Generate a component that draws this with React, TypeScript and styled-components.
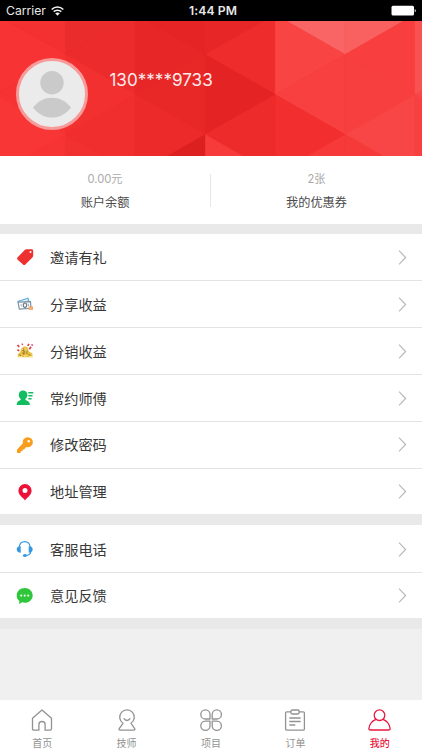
import React from "react";
import styled, { createGlobalStyle } from "styled-components";

const Global = createGlobalStyle`
  * { box-sizing: border-box; }
  body { margin: 0; background: #f0f0f0; }
`;

const Screen = styled.div`
  width: 422px;
  height: 750px;
  display: flex;
  flex-direction: column;
  overflow: hidden;
  background: #f0f0f0;
  color: #333;
  font-family: Inter, "Noto Sans CJK SC", sans-serif;
`;

const StatusBar = styled.header`
  flex: none;
  height: 20.5px;
  padding: 0 5px 0 6px;
  display: grid;
  grid-template-columns: 1fr auto 1fr;
  align-items: center;
  background: #000;
  color: #e8e8e8;
  font-size: 12.2px;
  line-height: 20px;
`;
const Carrier = styled.div`
  display: flex;
  align-items: center;
  gap: 5px;
  padding-top: 1px;
`;
const Clock = styled.div`
  font-weight: 600;
  letter-spacing: 0.1px;
  padding: 1px 0 0 3px;
`;
const BatteryIcon = styled.svg`
  justify-self: end;
`;

const Hero = styled.section`
  flex: none;
  height: 135.3px;
  position: relative;
  background: #f23030;
`;
const HeroPattern = styled.svg`
  position: absolute;
  inset: 0;
  width: 100%;
  height: 100%;
`;
const Profile = styled.div`
  position: relative;
  display: flex;
  gap: 21px;
  padding: 37.5px 0 0 16.4px;
`;
const Avatar = styled.div`
  width: 72px;
  height: 72px;
  border-radius: 50%;
  border: 3px solid #f79a9a;
  background: #ebebeb;
  overflow: hidden;
`;
const Phone = styled.div`
  padding-top: 10px;
  font-size: 17.1px;
  line-height: 24px;
  color: #ffeded;
`;

const Stats = styled.section`
  flex: none;
  height: 67.8px;
  display: grid;
  grid-template-columns: 1fr 1fr;
  padding-top: 18px;
  background: #fff;
`;
const Stat = styled.div<{ $divided?: boolean }>`
  height: 33px;
  display: flex;
  flex-direction: column;
  align-items: center;
  border-right: ${(p) => (p.$divided ? "1px solid #e6e6e6" : "0")};
`;
const StatValue = styled.div`
  margin-top: -4px;
  font-size: 11.2px;
  line-height: 18px;
  color: #a9a9a9;
`;
const StatLabel = styled.div`
  margin-top: 6px;
  font-size: 12.2px;
  line-height: 18px;
  color: #4a4a4a;
`;

const Group = styled.ul<{ $gap: number }>`
  flex: none;
  list-style: none;
  margin: 0;
  padding: 0;
  border-top: ${(p) => p.$gap}px solid #e9e9e9;
  background: #fff;
`;
const Row = styled.li<{ $height: number }>`
  height: ${(p) => p.$height}px;
  padding-top: 1px;
  display: grid;
  grid-template-columns: 50px 1fr 30px;
  align-items: center;
  & + & {
    padding-top: 0.4px;
    border-top: 1px solid #e3e3e3;
  }
`;
const RowIcon = styled.svg`
  width: 18px;
  height: 18px;
  margin-left: 15.5px;
  display: block;
`;
const RowLabel = styled.span`
  padding-top: 1px;
  font-size: 14.2px;
  line-height: 20px;
  color: #383838;
`;
const Chevron = styled.svg`
  width: 9px;
  height: 15px;
  margin-left: 5.5px;
`;
const Band = styled.div`
  flex: none;
  height: 11px;
  background: #e9e9e9;
`;

const TabBar = styled.nav`
  flex: none;
  margin-top: auto;
  height: 50.5px;
  display: grid;
  grid-template-columns: repeat(5, 1fr);
  background: #fff;
`;
const Tab = styled.div<{ $active?: boolean }>`
  display: flex;
  flex-direction: column;
  align-items: center;
  padding-top: 8px;
  font-size: 10px;
  line-height: 14px;
  gap: 4px;
  font-weight: ${(p) => (p.$active ? 500 : 400)};
  color: ${(p) => (p.$active ? "#e8193f" : "#929292")};
`;
const TabIcon = styled.svg`
  width: 24px;
  height: 24px;
  fill: none;
  stroke: currentColor;
  stroke-width: 1.3;
  stroke-linejoin: round;
  stroke-linecap: round;
`;

/* Facet colours of the triangular pattern: one list per 70px strip,
   top to bottom. Triangles alternate between pointing right and left. */
const strips: string[][] = [
  ["#f33131", "#f73333", "#f53333", "#f93636", "#f73434"],
  ["#eb2c2c", "#ec2c2c", "#f23030", "#f12e2e", "#f13030"],
  ["#e52525", "#e72727", "#e82727", "#ec2a2a", "#dc2020"],
  ["#e72727", "#ee2c2c", "#e42424", "#ed2b2b", "#f73a3a"],
  ["#f96565", "#f94444", "#f84040", "#f22e2e", "#f73939"],
  ["#f96060", "#f83e3e", "#f83f3f", "#f84545", "#f63a3a"],
  ["#f96060", "#f95252", "#f84848", "#f94040", "#f94040"],
];
const facets = strips.flatMap((colors, s) =>
  colors.map((fill, i) => {
    const l = -4.4 + s * 69.9;
    const r = l + 69.9;
    const y = -26 + i * 40;
    const pointsRight = (s + i) % 2 === 1;
    const points = pointsRight
      ? `${l},${y} ${l},${y + 80} ${r},${y + 40}`
      : `${r},${y} ${r},${y + 80} ${l},${y + 40}`;
    return { fill, points };
  })
);

type IconName = "tag" | "cash" | "gold" | "master" | "key" | "pin" | "headset" | "chat";
const icons: Record<IconName, React.ReactNode> = {
  tag: (
    <path
      fill="#ed3030"
      fillRule="evenodd"
      d="M10.200 1.200h5.300c1.200 0 1.700.5 1.700 1.600v4.700c0 .8-.2 1.300-.8 1.900l-7 7c-.8.8-1.600.8-2.400 0L1.700 11.800c-.8-.8-.8-1.700 0-2.500l7-7.300c.5-.5.8-.8 1.500-.8zM14.500 2.900a1 1 0 1 0 0 2 1 1 0 0 0 0-2z"
    />
  ),
  cash: (
    <>
      <path fill="#63adde" d="M1.500 6 12.300 2.500l1.400 4.100L2.700 10z" />
      <path fill="#e9f6ff" d="m3.500 6.600 8-2.600.5 1.600L4.200 8z" />
      <path fill="#fff" stroke="#7893a4" strokeWidth="1.200" d="m2 7.100 12.500-.5.4 6.700-11.500.7z" />
      <ellipse cx="9" cy="10.200" rx="1.700" ry="2.200" fill="#f7f7f7" stroke="#687681" strokeWidth="1.100" />
      <path stroke="#9eb3c0" d="m5 9 .4 2.600M12.400 8.600l.2 2.500" />
      <path fill="#ed9a58" d="M12.500 11.500H17v3.300h-4.500z" />
      <path stroke="#ffe0b8" strokeWidth=".6" d="M12.800 13.100h3.700" />
    </>
  ),
  gold: (
    <>
      <path fill="#eac346" d="M5.200 6.500 8 4.200l3.500 1 1.400 4.300 3.400 1.700.3 4.100H1.800v-3L4.200 10z" />
      <path fill="#f5dc7c" d="m6.500 6.500 1.800-1 1.500 1.200L9 9.500l-2.300 2z" />
      <path fill="none" stroke="#9b7628" strokeWidth=".9" d="M7.800 6v6.700M6.200 8.400l3 1M6 11.200l3.300-.2M3 12.500l2.200 1.400M11.300 8.500l-.6 3.400M12.200 12.200l2.300 1.300" />
      <path fill="none" stroke="#fff1b4" strokeWidth=".7" d="M3 14.500h3M8 13.900h3M13 14.500h3" />
      <path fill="none" stroke="#de3d45" strokeWidth="1.700" d="m1.500 3 1.700 1.900M1.500 7.700l1.700 1.200M5.800 2.700l1-.8M11.700 3.900l1.300-2M13.300 7.300l1.700-2.600M15.800 3.700l.7-1.400" />
    </>
  ),
  master: (
    <g fill="#12bc60">
      <path d="M2.800 5.700C2.800 3.100 4.400 1.400 7 1.400s4.400 1.700 4.400 4.300c0 2-.9 3.500-2 4.300v1c2.700.7 4.500 2 4.500 5H.7c0-3 1.400-4.300 4-5v-1C3.600 9.200 2.800 7.700 2.800 5.700z" />
      <path d="M12.300 3h5v1.400h-5zM12.300 6h4.200v1.400h-4.200zM12.300 9h3.300v1.400h-3.300z" />
    </g>
  ),
  key: (
    <path
      fill="#f99d1c"
      fillRule="evenodd"
      d="M11.600 1.200a5 5 0 0 0-4.800 6.400l-5.300 5.300c-.5.5-.5.9-.5 1.400v1.600c0 .8.4 1.200 1.200 1.200h1.600c.6 0 .9-.3.9-.9v-.9h.9c.7 0 1-.3 1-.9v-.9h.9c.4 0 .7-.1 1-.5l1.700-2.100a5 5 0 1 0 1.400-9.700zM12.700 4a1.300 1.300 0 1 1 0 2.600 1.300 1.300 0 0 1 0-2.600z"
    />
  ),
  pin: (
    <path
      fill="#ed1238"
      fillRule="evenodd"
      d="M9 1a6.600 6.600 0 0 0-6.600 6.600c0 3.800 2.600 5.800 6.600 9.600 4-3.800 6.600-5.800 6.600-9.600A6.600 6.600 0 0 0 9 1zm0 4a2.500 2.500 0 1 1 0 5 2.500 2.500 0 0 1 0-5z"
    />
  ),
  headset: (
    <>
      <path fill="none" stroke="#3598e3" strokeWidth="1.100" d="M3.100 7.200C3.600 3.500 5.700 1.600 8.700 1.600s5.100 1.900 5.600 5.600M14.800 11.500c0 2.400-1.700 3.700-4.900 4" />
      <path fill="#3598e3" d="M4.700 6.300v6.400C2.200 12.700.7 11.500.7 9.500s1.500-3.200 4-3.200zM12.700 6.300v6.400c2.500 0 4-1.200 4-3.200s-1.500-3.200-4-3.200z" />
      <ellipse cx="8.900" cy="15.400" rx="2" ry="1.500" fill="#3598e3" />
    </>
  ),
  chat: (
    <>
      <path fill="#2fc63b" d="M8.700 1C4.200 1 .7 4.200.7 8.400c0 2.300 1 4.200 2.700 5.600L3 17l3.200-1.700c.8.200 1.700.4 2.500.4 4.500 0 8-3.200 8-7.300S13.200 1 8.700 1z" />
      <g fill="#e8ffe9">
        <circle cx="5.200" cy="8.600" r="1.050" />
        <circle cx="8.700" cy="8.600" r="1.050" />
        <circle cx="12.200" cy="8.600" r="1.050" />
      </g>
    </>
  ),
};

const groups: { gap: number; rowHeight: number; rows: { icon: IconName; label: string }[] }[] = [
  {
    gap: 10,
    rowHeight: 46.8,
    rows: [
      { icon: "tag", label: "邀请有礼" },
      { icon: "cash", label: "分享收益" },
      { icon: "gold", label: "分销收益" },
      { icon: "master", label: "常约师傅" },
      { icon: "key", label: "修改密码" },
      { icon: "pin", label: "地址管理" },
    ],
  },
  {
    gap: 11,
    rowHeight: 46.3,
    rows: [
      { icon: "headset", label: "客服电话" },
      { icon: "chat", label: "意见反馈" },
    ],
  },
];

const tabs: { label: string; active?: boolean; art: React.ReactNode }[] = [
  {
    label: "首页",
    art: <path d="m12 2 9.500 8.300v10.500c0 .9-.5 1.400-1.400 1.400h-5v-5.600c0-2-1.200-3.100-3.100-3.100s-3.100 1.100-3.100 3.100v5.600h-5c-.9 0-1.400-.5-1.400-1.400V10.300z" />,
  },
  {
    label: "技师",
    art: <><path d="M8 15.300A7.300 7.300 0 1 1 16 15.300l3.700 5.400c.5.800.1 1.500-.8 1.500H5c-.9 0-1.300-.7-.8-1.500z" /><path d="M9 10.700c1.400 2.400 4.600 2.400 6 0" /></>,
  },
  {
    label: "项目",
    art: <path d="M11 11H6.400A4.600 4.600 0 1 1 11 6.400zM13.200 11V6.400a4.600 4.600 0 1 1 4.600 4.600zM11 13.200v4.600a4.600 4.600 0 1 1-4.600-4.600zM13.200 13.200h4.600a4.600 4.600 0 1 1-4.600 4.600z" />,
  },
  {
    label: "订单",
    art: <><path d="M7.800 3.800H3.900c-.8 0-1.300.5-1.300 1.300v15.800c0 .8.500 1.300 1.300 1.300h16.200c.8 0 1.300-.5 1.300-1.300V5.100c0-.8-.5-1.300-1.300-1.300h-3.900" /><rect x="7.800" y="2" width="8.400" height="4" rx="1.400" /><path d="M6.800 10h10.400M6.800 13.500h10.400M6.800 17h5" /></>,
  },
  {
    label: "我的",
    active: true,
    art: <><circle cx="11.500" cy="7.200" r="5.300" /><path d="M8 11.400C4.200 12.900 1.400 16.500.9 20.500c-.1 1 .4 1.500 1.400 1.500h18.400c1 0 1.500-.5 1.400-1.500-.5-4-3.300-7.600-7.100-9.100" /></>,
  },
];

export default function App() {
  return (
    <>
      <Global />
      <Screen>
        <StatusBar>
          <Carrier>
            <span>Carrier</span>
            <svg width="13" height="10" viewBox="0 0 13 10" fill="none" stroke="#f2f2f2" strokeWidth="1.600">
              <path d="M.7 3.500c3.200-3.300 8.400-3.300 11.600 0M2.700 5.700c2.100-2 5.500-2 7.600 0" />
              <path fill="#f2f2f2" stroke="none" d="M4.200 7.300c1.300-1.200 3.300-1.200 4.600 0L6.500 9.700z" />
            </svg>
          </Carrier>
          <Clock>1:44 PM</Clock>
          <BatteryIcon width="26" height="11" viewBox="0 0 26 11">
            <rect x=".5" y=".8" width="22.500" height="9.700" rx="1.500" fill="#fff" />
            <path d="M23.700 4c1.600.4 1.600 2.900 0 3.300z" fill="#ddd" />
          </BatteryIcon>
        </StatusBar>

        <Hero>
          <HeroPattern viewBox="0 20.500 422 135.300" preserveAspectRatio="none">
            {facets.map((f) => (
              <polygon key={f.points} points={f.points} fill={f.fill} stroke={f.fill} strokeWidth="0.400" />
            ))}
          </HeroPattern>
          <Profile>
            <Avatar>
              <svg width="66" height="66" viewBox="0 0 66 66" fill="#cacaca">
                <circle cx="33" cy="21.700" r="11.700" />
                <path d="M14 46.500c10-13 28-13 38 0-10 13.400-28 13.400-38 0z" />
              </svg>
            </Avatar>
            <Phone>130****9733</Phone>
          </Profile>
        </Hero>

        <Stats>
          <Stat $divided>
            <StatValue>0.00元</StatValue>
            <StatLabel>账户余额</StatLabel>
          </Stat>
          <Stat>
            <StatValue>2张</StatValue>
            <StatLabel>我的优惠券</StatLabel>
          </Stat>
        </Stats>

        {groups.map((group) => (
          <Group key={group.gap} $gap={group.gap}>
            {group.rows.map((row) => (
              <Row key={row.label} $height={group.rowHeight}>
                <RowIcon viewBox="0 0 18 18">{icons[row.icon]}</RowIcon>
                <RowLabel>{row.label}</RowLabel>
                <Chevron viewBox="0 0 9 15" fill="none" stroke="#b9b9b9" strokeWidth="1.200">
                  <path d="m1 .7 6.600 6.800L1 14.300" />
                </Chevron>
              </Row>
            ))}
          </Group>
        ))}
        <Band />

        <TabBar>
          {tabs.map((tab) => (
            <Tab key={tab.label} $active={tab.active}>
              <TabIcon viewBox="0 0 24 24">{tab.art}</TabIcon>
              <span>{tab.label}</span>
            </Tab>
          ))}
        </TabBar>
      </Screen>
    </>
  );
}
